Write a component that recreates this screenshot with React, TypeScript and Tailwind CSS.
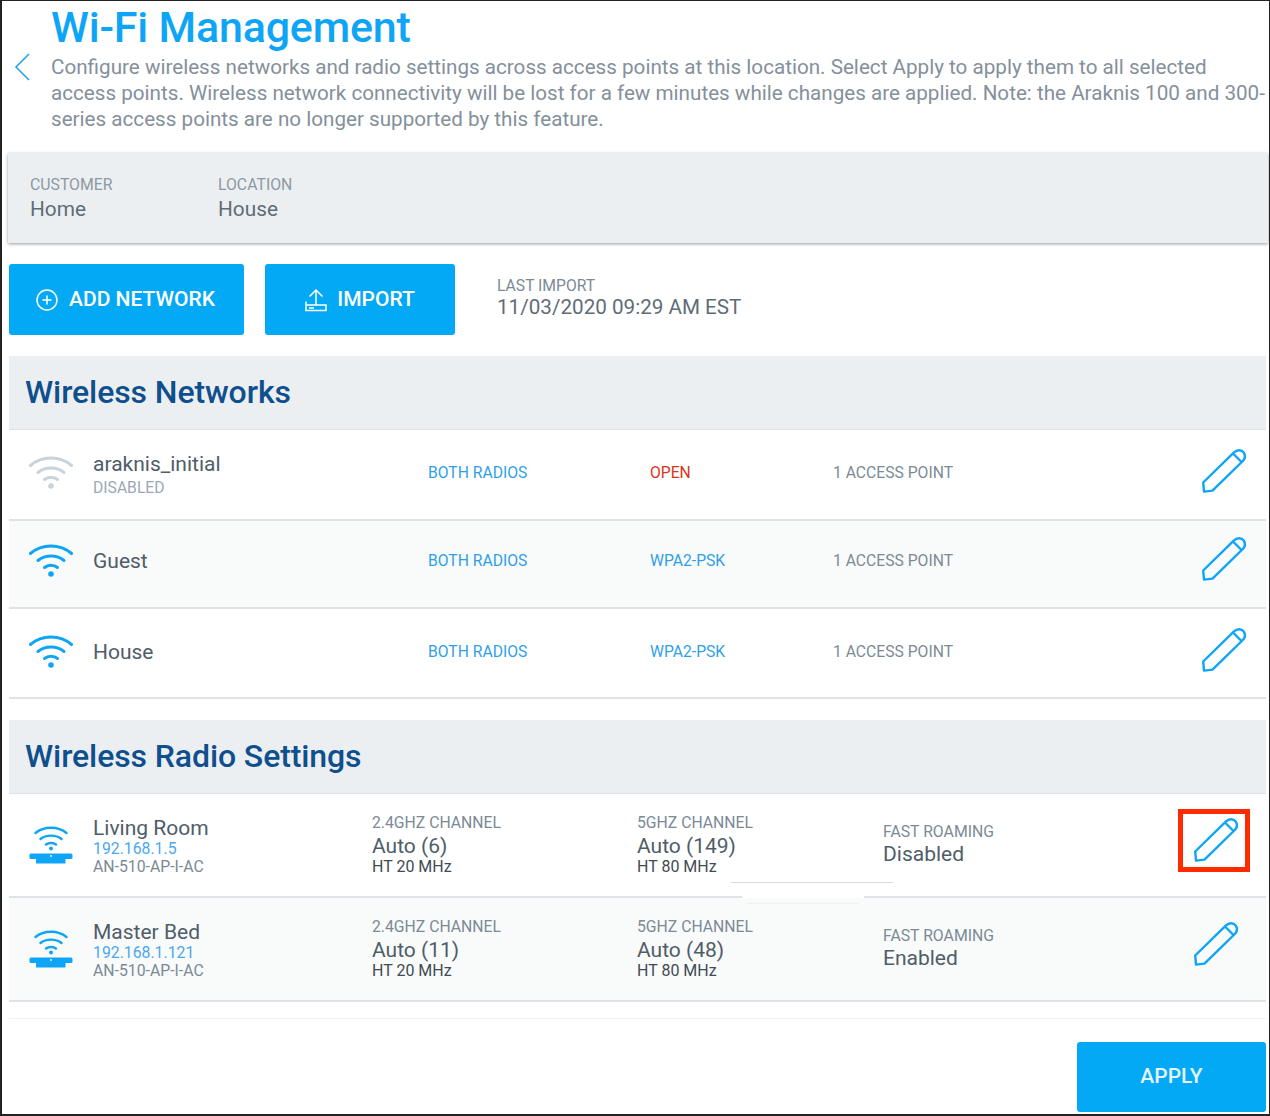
import { CirclePlus } from 'lucide-react';

const font = { fontFamily: 'Roboto, sans-serif' };

function WifiIcon({ muted }: { muted?: boolean }) {
  const color = muted ? '#c9d3da' : '#0ea5f7';
  return (
    <svg width="44" height="36" viewBox="0 0 44 36" fill="none" stroke={color} strokeWidth="3" strokeLinecap="round">
      <path d="M1.5 9.5C13 -0.5 31 -0.5 42.5 9.5" />
      <path d="M9 16.5C16 10.5 28 10.5 35 16.5" />
      <path d="M15.5 23.5C19 20.5 25 20.5 28.5 23.5" />
      <circle cx="22" cy="30" r="2.8" fill={color} stroke="none" />
    </svg>
  );
}

function ApIcon() {
  return (
    <svg width="44" height="38" viewBox="0 0 44 38" fill="none" stroke="#0ea5f7" strokeWidth="2.4" strokeLinecap="round">
      <path d="M6.5 7C15 0 29 0 37.5 7" />
      <path d="M11.5 13C17 8.5 27 8.5 32.5 13" />
      <path d="M17 18.5C19.5 16.5 24.5 16.5 27 18.5" />
      <circle cx="22" cy="22.5" r="2" fill="#0ea5f7" stroke="none" />
      <rect x="0.5" y="27.5" width="43" height="5.5" rx="1.5" fill="#0ea5f7" stroke="none" />
      <rect x="7" y="33" width="29.5" height="4.5" rx="0.5" fill="#0ea5f7" stroke="none" />
      <circle cx="22" cy="30" r="0.9" fill="#ffffff" stroke="none" />
    </svg>
  );
}

function PencilIcon() {
  return (
    <svg width="44" height="44" viewBox="0 0 44 44" fill="none" stroke="#0ea5f7" strokeWidth="2.4" strokeLinejoin="round">
      <path d="M1.2 33.5L32 3.4C35 0.4 39.6 0.6 41.6 3.4C43.6 6.4 43 9.8 40.8 12L10.5 41.6L2 42.6Z" />
      <path d="M31.5 5L39.5 13" />
    </svg>
  );
}

function UploadIcon() {
  return (
    <svg width="22" height="24" viewBox="0 0 22 24" fill="none" stroke="#ffffff" strokeWidth="1.5" className="shrink-0">
      <path d="M11 17V2M4.5 8.5L11 2L17.5 8.5" />
      <path d="M1 13.5V22.5H21V17H1" />
      <path d="M4 20H9" />
    </svg>
  );
}

const networks = [
  { name: 'araknis_initial', sub: 'DISABLED', security: 'OPEN', open: true, row: 'h-[91px] pb-[1px] bg-white' },
  { name: 'Guest', security: 'WPA2-PSK', row: 'h-[88px] pb-[4px] bg-[#f9fafa]' },
  { name: 'House', security: 'WPA2-PSK', row: 'h-[90px] bg-white' },
];

const radios = [
  { name: 'Living Room', ip: '192.168.1.5', ch24: 'Auto (6)', ch5: 'Auto (149)', roaming: 'Disabled', bg: 'bg-white', flagged: true },
  { name: 'Master Bed', ip: '192.168.1.121', ch24: 'Auto (11)', ch5: 'Auto (48)', roaming: 'Enabled', bg: 'bg-[#f9fafa]' },
];

function SectionHeader({ title }: { title: string }) {
  return (
    <div className="h-[74px] pb-[2px] bg-[#eceff1] border-b border-[#dde2e6] flex items-center pl-4">
      <h2 className="text-[32px] font-medium text-[#0f4f8e] tracking-[-0.1px]">{title}</h2>
    </div>
  );
}

function ChannelCell({ label, value }: { label: string; value: string }) {
  return (
    <div className="flex flex-col mb-[4px]">
      <span className="text-[15.75px] leading-[18px] text-[#7b8a96]">{label}</span>
      <span className="text-[21px] leading-[29px] text-[#4f5d69]">{value}</span>
      <span className="text-[16px] leading-[11px] text-[#3f4a54]">{label.startsWith('2') ? 'HT 20 MHz' : 'HT 80 MHz'}</span>
    </div>
  );
}

export default function App() {
  return (
    <div style={font} className="relative w-[1270px] h-[1116px] bg-white border-l-2 border-t border-r border-b-2 border-[#222] overflow-hidden">
      <header className="flex h-[152px]">
        <div className="w-[49px] shrink-0 pl-[12px] pt-[52px]">
          <svg width="16" height="28" viewBox="0 0 16 28" fill="none" stroke="#2f9fe8" strokeWidth="1.6">
            <path d="M15 1L2 14L15 27" />
          </svg>
        </div>
        <div className="flex-1 min-w-0">
          <h1 className="text-[43px] leading-[52px] font-medium text-[#0ea5f7] tracking-[-0.2px]">Wi-Fi Management</h1>
          <p className="mt-[1px] w-[1222px] text-[20.65px] leading-[26px] text-[#84909b]">
            Configure wireless networks and radio settings across access points at this location. Select Apply to apply them to all selected<br />
            access points. Wireless network connectivity will be lost for a few minutes while changes are applied. Note: the Araknis 100 and 300-<br />
            series access points are no longer supported by this feature.
          </p>
        </div>
      </header>

      <section className="ml-[6px] mr-[1px] h-[90px] bg-[#eceff1] shadow-[0_1px_3px_rgba(0,0,0,0.4)] flex pl-[22px] pt-[23px]">
        <div className="w-[188px]">
          <div className="text-[15.8px] leading-[18px] text-[#8d99a3]">CUSTOMER</div>
          <div className="mt-[2px] text-[20.8px] leading-[26px] text-[#5f6c77]">Home</div>
        </div>
        <div>
          <div className="text-[15.8px] leading-[18px] text-[#8d99a3]">LOCATION</div>
          <div className="mt-[2px] text-[20.8px] leading-[26px] text-[#5f6c77]">House</div>
        </div>
      </section>

      <div className="mt-[20px] ml-[7px] flex items-center h-[72px]">
        <button className="w-[235px] h-[71px] pt-[2px] pr-[3px] bg-[#03a9f4] rounded-[3px] flex items-center justify-center gap-[10px] text-white text-[21px] font-medium">
          <CirclePlus size={24} strokeWidth={1.5} />
          ADD NETWORK
        </button>
        <button className="ml-[21px] w-[190px] h-[71px] pt-[2px] bg-[#03a9f4] rounded-[3px] flex items-center justify-center gap-[10px] text-white text-[21px] font-medium">
          <UploadIcon />
          IMPORT
        </button>
        <div className="ml-[42px] mb-[1px]">
          <div className="mb-[-1px] text-[15.7px] leading-[18px] text-[#7b8a96]">LAST IMPORT</div>
          <div className="text-[20.65px] leading-[26px] text-[#5f6c77]">11/03/2020 09:29 AM EST</div>
        </div>
      </div>

      <section className="mt-[21px] ml-[7px] mr-[3px]">
        <SectionHeader title="Wireless Networks" />
        {networks.map((n) => (
          <div key={n.name} className={`${n.row} border-b-2 border-[#dfe3e7] flex items-center pl-5 pr-5`}>
            <div className="w-11 shrink-0"><WifiIcon muted={n.open} /></div>
            <div className={`ml-5 w-[335px] shrink-0 ${n.sub ? 'mt-[2px]' : 'mb-[2px]'}`}>
              <div className="text-[21px] leading-[26px] text-[#4f5d69]">{n.name}</div>
              {n.sub && <div className="text-[15.7px] leading-[22px] text-[#9aa8b3]">{n.sub}</div>}
            </div>
            <div className="w-[222px] shrink-0 mb-[2px] text-[15.7px] text-[#2f9fe8]">BOTH RADIOS</div>
            <div className={`w-[183px] shrink-0 mb-[2px] text-[15.7px] ${n.open ? 'text-[#d9331a]' : 'text-[#2f9fe8]'}`}>{n.security}</div>
            <div className="flex-1 mb-[2px] text-[15.7px] text-[#7b8a96]">1 ACCESS POINT</div>
            <div className="mb-[6px]"><PencilIcon /></div>
          </div>
        ))}
      </section>

      <section className="mt-[21px] ml-[7px] mr-[3px]">
        <SectionHeader title="Wireless Radio Settings" />
        {radios.map((r) => (
          <div key={r.name} className={`h-[104px] ${r.bg} border-b-2 border-[#dfe3e7] flex items-center pl-5 pr-7`}>
            <div className="w-11 shrink-0"><ApIcon /></div>
            <div className="ml-5 w-[279px] shrink-0 flex flex-col pt-[2px]">
              <span className="text-[21px] leading-[22px] text-[#4f5d69]">{r.name}</span>
              <span className="text-[15.8px] leading-[19px] text-[#4aa8f0]">{r.ip}</span>
              <span className="text-[15.8px] leading-[17px] text-[#7b8a96]">AN-510-AP-I-AC</span>
            </div>
            <div className="w-[265px] shrink-0"><ChannelCell label="2.4GHZ CHANNEL" value={r.ch24} /></div>
            <div className="w-[246px] shrink-0"><ChannelCell label="5GHZ CHANNEL" value={r.ch5} /></div>
            <div className="flex-1">
              <div className="text-[15.8px] leading-[18px] text-[#7b8a96]">FAST ROAMING</div>
              <div className="mt-[-1px] text-[21px] leading-[28px] text-[#4f5d69]">{r.roaming}</div>
            </div>
            <div className="relative mb-[10px]">
              <PencilIcon />
              {r.flagged && <div className="absolute left-[-16px] top-[-9px] w-[72px] h-[63px] border-[5px] border-[#ff2a00]" />}
            </div>
          </div>
        ))}
      </section>

      <div className="mt-[16px] border-t border-[#f0f1f2] ml-[7px] mr-[3px]" />

      <div className="mt-[23px] flex justify-end pr-[3px]">
        <button className="w-[189px] h-[70px] bg-[#03a9f4] rounded-[3px] text-[#e3f4fd] text-[21px] font-medium">APPLY</button>
      </div>

      {/* stray marks left in the source screenshot */}
      <div className="absolute left-[729px] top-[881px] w-[162px] h-px bg-[#d5dbe0]" />
      <div className="absolute left-[740px] top-[895px] w-[122px] h-[2px] bg-white" />
      <div className="absolute left-[745px] top-[902px] w-[112px] h-px bg-[#eef0f2]" />
    </div>
  );
}
